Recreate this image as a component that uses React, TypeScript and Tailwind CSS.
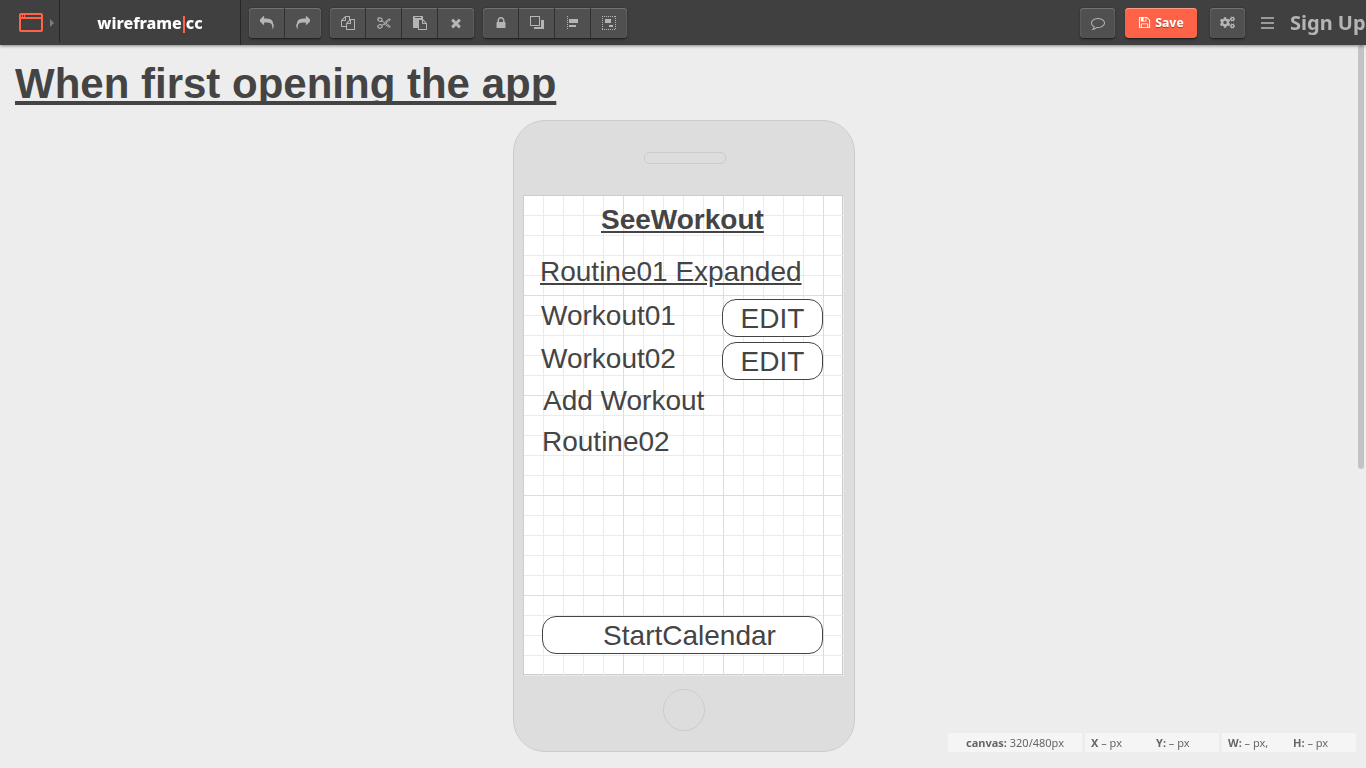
import type { ReactNode } from 'react';
import { FaCogs } from 'react-icons/fa';

const glyphs = {
  reply:
    'M1792 1120q0 166-127 451-3 7-10.5 24t-13.5 30-13 22q-12 17-28 17-15 0-23.5-10t-8.5-25q0-9 2.5-26.5t2.5-23.5q5-68 5-123 0-112-19.5-200.5t-54-153.5-89-112-120-78.5-151-47.5-182.5-24-208-8h-224v256q0 26-19 45t-45 19-45-19l-512-512q-19-19-19-45t19-45l512-512q19-19 45-19t45 19 19 45v256h224q713 0 875 403 53 134 53 333z',
  copy:
    'M1696 384q40 0 68 28t28 68v1216q0 40-28 68t-68 28h-960q-40 0-68-28t-28-68v-288h-544q-40 0-68-28t-28-68v-672q0-40 20-88t48-76l408-408q28-28 76-48t88-20h416q40 0 68 28t28 68v328q68-40 128-40h416zm-544 213l-299 299h299v-299zm-640-384l-299 299h299v-299zm196 647l316-316v-416h-384v416q0 40-28 68t-68 28h-416v640h512v-256q0-40 20-88t48-76zm956 804v-1152h-384v416q0 40-28 68t-68 28h-416v640h896z',
  paste:
    'M768 1664h896v-640h-416q-40 0-68-28t-28-68v-416h-384v1152zm256-1440v-64q0-13-9.5-22.5t-22.5-9.5h-704q-13 0-22.5 9.5t-9.5 22.5v64q0 13 9.5 22.5t22.5 9.5h704q13 0 22.5-9.5t9.5-22.5zm256 672h299l-299-299v299zm512 128v672q0 40-28 68t-68 28h-960q-40 0-68-28t-28-68v-160h-544q-40 0-68-28t-28-68v-1344q0-40 28-68t68-28h1088q40 0 68 28t28 68v328q21 13 36 28l408 408q28 28 48 76t20 88z',
  times:
    'M1490 1322q0 40-28 68l-136 136q-28 28-68 28t-68-28l-294-294-294 294q-28 28-68 28t-68-28l-136-136q-28-28-28-68t28-68l294-294-294-294q-28-28-28-68t28-68l136-136q28-28 68-28t68 28l294 294 294-294q28-28 68-28t68 28l136 136q28 28 28 68t-28 68l-294 294 294 294q28 28 28 68z',
  lock:
    'M640 768h512v-192q0-106-75-181t-181-75-181 75-75 181v192zm832 96v576q0 40-28 68t-68 28h-960q-40 0-68-28t-28-68v-576q0-40 28-68t68-28h32v-192q0-184 132-316t316-132 316 132 132 316v192h32q40 0 68 28t28 68z',
  comment:
    'M896 384q-204 0-381.5 69.5t-282 187.5-104.5 255q0 112 71.5 213.5t201.5 175.5l87 50-27 96q-24 91-70 172 152-63 275-171l43-38 57 6q69 8 130 8 204 0 381.5-69.5t282-187.5 104.5-255-104.5-255-282-187.5-381.5-69.5zm896 512q0 174-120 321.5t-326 233-450 85.5q-70 0-145-8-198 175-460 242-49 14-114 22h-5q-15 0-27-10.5t-16-27.5v-1q-3-4-.5-12t2-10 4.5-9.5l6-9 7-8.5 8-9q7-8 31-34.5t34.5-38 31-39.5 32.5-51 27-59 26-76q-157-89-247.5-220t-90.5-281q0-174 120-321.5t326-233 450-85.5 450 85.5 326 233 120 321.5z',
  save:
    'M512 1536h768v-384h-768v384zm896 0h128v-896q0-14-10-38.5t-20-34.5l-281-281q-10-10-34-20t-39-10v416q0 40-28 68t-68 28h-576q-40 0-68-28t-28-68v-416h-128v1280h128v-416q0-40 28-68t68-28h832q40 0 68 28t28 68v416zm-384-928v-320q0-13-9.5-22.5t-22.5-9.5h-192q-13 0-22.5 9.5t-9.5 22.5v320q0 13 9.5 22.5t22.5 9.5h192q13 0 22.5-9.5t9.5-22.5zm640 32v928q0 40-28 68t-68 28h-1344q-40 0-68-28t-28-68v-1344q0-40 28-68t68-28h928q40 0 88 20t76 48l280 280q28 28 48 76t20 88z',
};

function Glyph({ name, className = 'size-[14px]' }: { name: keyof typeof glyphs; className?: string }) {
  return (
    <svg viewBox="0 0 1792 1792" fill="currentColor" className={className} aria-hidden="true">
      <path d={glyphs[name]} />
    </svg>
  );
}

function Scissors() {
  return (
    <svg viewBox="0 0 14 14" fill="none" stroke="currentColor" className="size-[14px]" aria-hidden="true">
      <ellipse cx="3" cy="3.6" rx="2.2" ry="1.7" transform="rotate(20 3 3.6)" strokeWidth="1.2" />
      <ellipse cx="3" cy="10.4" rx="2.2" ry="1.7" transform="rotate(-20 3 10.4)" strokeWidth="1.2" />
      <path d="M4.8 4.8 7.4 6.6 12 3l1.4.5L8.6 7.2 7 8.2 4.8 9.4M6.8 7.6l5.2 3.6 1.4-.5L9 7.2" strokeWidth="1" />
    </svg>
  );
}

function SendBack() {
  return (
    <svg viewBox="0 0 14 14" className="size-[14px]" fill="currentColor" shapeRendering="crispEdges" aria-hidden="true">
      <path d="M0 0h10v10H0zM1 1v8h8V1z" fillRule="evenodd" />
      <path d="M11 4h3v9H4v-2h7z" />
    </svg>
  );
}

function AlignLeft() {
  return (
    <svg viewBox="0 0 12 14" className="h-[14px] w-3" fill="currentColor" shapeRendering="crispEdges" aria-hidden="true">
      <path d="M.5 0v14" stroke="currentColor" strokeDasharray="1 1" />
      <path d="M2 3h9v4H2zM2 9h7v2H2z" />
    </svg>
  );
}

function GroupIcon() {
  return (
    <svg viewBox="0 0 14 14" className="size-[14px]" fill="currentColor" shapeRendering="crispEdges" aria-hidden="true">
      <path d="M0 .5h14M0 13.5h14M.5 0v14M13.5 0v14" stroke="currentColor" strokeDasharray="1 1" />
      <path d="M3 3h6v4H3zM7 9h4v2H7z" />
    </svg>
  );
}

const raised =
  'h-[30px] rounded-[4px] bg-[#505050] text-[#b5b5b5] shadow-[inset_0_1px_0_#727272,inset_1px_0_0_#5c5c5c,inset_-1px_0_0_#5c5c5c,0_1px_0_#242424,0_0_0_1px_#393939,0_2px_2px_#303030]';

function Tool({ label, children }: { label: string; children: ReactNode }) {
  return (
    <button type="button" aria-label={label} className="flex h-full w-9 items-center justify-center border-r border-[#303030] last:border-r-0">
      {children}
    </button>
  );
}

function ToolGroup({ children }: { children: ReactNode }) {
  return <div className={`flex overflow-hidden ${raised}`}>{children}</div>;
}

function Header() {
  return (
    <header className="relative z-10 flex h-[45px] items-center bg-[#404040] shadow-[0_1px_3px_rgba(0,0,0,0.45)]">
      <button type="button" aria-label="Choose canvas" className="flex h-[42px] w-[60px] items-center gap-[7px] self-start border-r border-[#262626] pt-[3px] pl-[19px]">
        <svg viewBox="0 0 24 19" className="h-[19px] w-6 shrink-0" fill="none" stroke="#ff6347" aria-hidden="true">
          <rect x="1" y="1" width="22" height="17" rx="1" strokeWidth="2" />
          <path d="M1 5h22" strokeWidth="2" />
          <path d="M3.5 2v2M5.5 2v2" strokeWidth="1" />
        </svg>
        <svg viewBox="0 0 4 8" className="h-2 w-1" fill="#7c7c7c" aria-hidden="true">
          <path d="M0 0l4 4-4 4z" />
        </svg>
      </button>
      <a href="#home" className="flex h-full w-[181px] items-center justify-center border-r border-[#262626] text-[16px] font-extrabold text-white">
        wireframe<span className="mx-px mt-[3px] h-[17px] w-[2px] bg-[#ff6347]" />cc
      </a>
      <div className="flex gap-[9px] pl-2">
        <ToolGroup>
          <Tool label="Undo"><Glyph name="reply" /></Tool>
          <Tool label="Redo"><Glyph name="reply" className="size-[14px] -scale-x-100" /></Tool>
        </ToolGroup>
        <ToolGroup>
          <Tool label="Copy"><Glyph name="copy" /></Tool>
          <Tool label="Cut"><Scissors /></Tool>
          <Tool label="Paste"><Glyph name="paste" /></Tool>
          <Tool label="Delete"><Glyph name="times" /></Tool>
        </ToolGroup>
        <ToolGroup>
          <Tool label="Lock"><Glyph name="lock" /></Tool>
          <Tool label="Send to back"><SendBack /></Tool>
          <Tool label="Align left"><AlignLeft /></Tool>
          <Tool label="Group"><GroupIcon /></Tool>
        </ToolGroup>
      </div>
      <div className="ml-auto flex items-center">
        <button type="button" aria-label="Comments" className={`flex w-[35px] items-center justify-center ${raised}`}>
          <Glyph name="comment" />
        </button>
        <button type="button" className="ml-[10px] flex h-[30px] w-[72px] items-center justify-center gap-1 rounded-[4px] bg-[#ff6347] text-[12px] font-extrabold text-white shadow-[inset_0_1px_0_#ff9a86,0_1px_0_#242424,0_2px_2px_#303030] [text-shadow:0_1px_1px_#a03c2a]">
          <Glyph name="save" className="size-[13px]" />
          Save
        </button>
        <button type="button" aria-label="Settings" className={`ml-[13px] flex w-[35px] items-center justify-center ${raised}`}>
          <FaCogs className="size-[15px]" />
        </button>
        <button type="button" aria-label="Menu" className="ml-4 flex w-[13px] flex-col gap-[3px]">
          <span className="h-[2px] w-full bg-[#9a9a9a]" />
          <span className="h-[2px] w-full bg-[#9a9a9a]" />
          <span className="h-[2px] w-full bg-[#9a9a9a]" />
        </button>
        <a href="#signup" className="ml-4 w-[76px] pt-px text-[20px] font-bold whitespace-nowrap text-[#b5b5b5]">Sign Up</a>
      </div>
    </header>
  );
}

const gridLines =
  'bg-[linear-gradient(to_right,transparent_99px,#dddddd_99px),linear-gradient(to_bottom,transparent_99px,#dddddd_99px),linear-gradient(to_right,transparent_19px,#ebebeb_19px),linear-gradient(to_bottom,transparent_19px,#ebebeb_19px)] bg-[size:100px_100px,100px_100px,20px_20px,20px_20px]';

const outlined = 'absolute h-[38px] rounded-[14px] border border-[#444] bg-white text-center leading-[38px]';

function Phone() {
  return (
    <section aria-label="Phone" className="flex h-[632px] w-[342px] flex-col items-center rounded-[32px] border border-[#ccc] bg-[#ddd] pt-[31px]">
      <div className="ml-[2px] h-3 w-[82px] rounded-[5px] border border-[#ccc]" />
      <div className="relative mt-[31px] mr-[2px] h-[480px] w-[320px] shrink-0 border border-[#ccc] bg-white text-[28px] leading-8 whitespace-nowrap text-[#444]">
        <div className={`absolute top-0 left-0 h-[480px] w-[320px] ${gridLines}`} />
        <h2 className="absolute top-2 left-[77px] font-bold underline">SeeWorkout</h2>
        <p className="absolute top-[60px] left-4 underline">Routine01 Expanded</p>
        <p className="absolute top-[104px] left-[17px]">Workout01</p>
        <button type="button" className={`top-[103px] left-[198px] w-[101px] ${outlined}`}>EDIT</button>
        <p className="absolute top-[147px] left-[17px]">Workout02</p>
        <button type="button" className={`top-[146px] left-[198px] w-[101px] ${outlined}`}>EDIT</button>
        <p className="absolute top-[189px] left-[19px]">Add Workout</p>
        <p className="absolute top-[230px] left-[18px]">Routine02</p>
        <button type="button" className={`top-[420px] left-[18px] w-[281px] pl-[14px] ${outlined}`}>StartCalendar</button>
      </div>
      <div className="mt-[14px] size-[42px] shrink-0 rounded-full border border-[#ccc]" />
    </section>
  );
}

function StatusBar() {
  return (
    <footer className="fixed right-[10px] bottom-4 flex gap-[3px] text-[11px] leading-[19px] text-[#666] [&>div]:h-[19px] [&>div]:w-[134px] [&>div]:bg-[#f5f5f5]">
      <div className="text-center"><b>canvas:</b> 320/480px</div>
      <div className="flex pl-[6px]">
        <span className="w-[65px]"><b>X</b> – px</span>
        <span><b>Y:</b> – px</span>
      </div>
      <div className="flex pl-[6px]">
        <span className="w-[65px]"><b>W:</b> – px,</span>
        <span><b>H:</b> – px</span>
      </div>
    </footer>
  );
}

export default function App() {
  return (
    <div className="min-h-screen overflow-x-hidden bg-[#ededed] font-['Noto_Sans',sans-serif]">
      <Header />
      <main className="pt-[15px] pb-4 font-['Liberation_Sans',Arial,sans-serif]">
        <h1 className="h-[45px] overflow-hidden px-[15px] text-[42px] leading-[48px] font-bold text-[#444] underline [text-decoration-skip-ink:none]">
          When first opening the app
        </h1>
        <div className="flex justify-center pt-[15px] pl-[2px]">
          <Phone />
        </div>
      </main>
      <div className="fixed top-[45px] right-[2px] h-[424px] w-[6px] rounded-[3px] bg-[#c3c3c3]" />
      <StatusBar />
    </div>
  );
}
